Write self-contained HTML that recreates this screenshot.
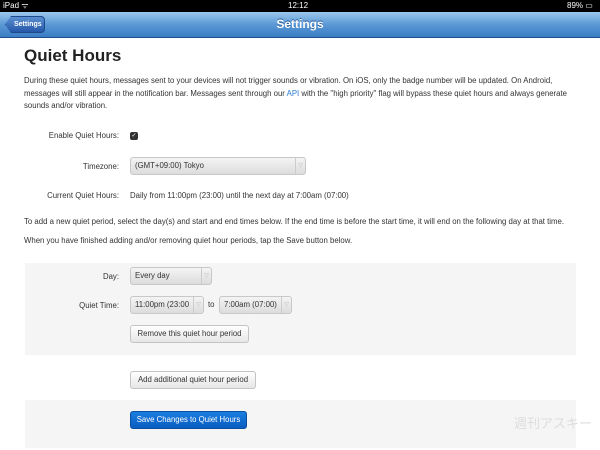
<!DOCTYPE html>
<html><head><style>
*{margin:0;padding:0;box-sizing:border-box}
body{width:600px;height:450px;overflow:hidden;background:#fff;font-family:"Liberation Sans",sans-serif;color:#333;position:relative}
.a{position:absolute;white-space:nowrap}
.s{font-size:7.8px}
.sel{position:absolute;height:18px;border:1px solid #c8c8c8;border-radius:3px;background:linear-gradient(#f4f4f4,#dcdcdc);font-size:7.8px;line-height:16px;padding-left:4px;color:#333}
.sel i{position:absolute;right:0;top:0;width:10px;height:16px;border-left:1px solid #ccc;font-style:normal;color:#bbb;font-size:6px;text-align:center}
.btn{position:absolute;height:18px;border:1px solid #c4c4c4;border-radius:3px;background:linear-gradient(#fff,#e6e6e6);font-size:7.8px;line-height:16px;text-align:center;color:#333}
</style></head><body>
<div class="a" style="left:0;top:0;width:600px;height:12px;background:#000;color:#fff;font-size:8px;line-height:12px">
<span class="a" style="left:3px">iPad ᯤ</span><span class="a" style="left:288px">12:12</span><span class="a" style="left:567px">89% ▭</span></div>
<div class="a" style="left:0;top:12px;width:600px;height:26px;background:linear-gradient(#9cc8ec,#5a98d6 50%,#3a7cc4);border-bottom:1px solid #1f4f8a"></div>
<div class="a" style="left:5px;top:16px;width:40px;height:17px;background:linear-gradient(#5b8fd0,#2557a8);border:1px solid #1d4a8a;border-radius:4px;clip-path:polygon(6px 0,100% 0,100% 100%,6px 100%,0 50%);color:#fff;font-size:7px;font-weight:bold;line-height:15px;padding-left:8px">Settings</div>
<div class="a" style="left:0;width:600px;top:17px;text-align:center;color:#fff;font-size:12px;font-weight:bold;text-shadow:0 -1px #2a5a98">Settings</div>
<div class="a" style="left:24px;top:46px;font-size:17px;font-weight:bold;color:#222">Quiet Hours</div>
<div class="a s" style="left:24px;top:75px;line-height:12.5px;white-space:normal;width:565px">During these quiet hours, messages sent to your devices will not trigger sounds or vibration. On iOS, only the badge number will be updated. On Android, messages will still appear in the notification bar. Messages sent through our <span style="color:#2a7ad0">API</span> with the "high priority" flag will bypass these quiet hours and always generate sounds and/or vibration.</div>
<div class="a s" style="left:0;width:119px;text-align:right;top:131px">Enable Quiet Hours:</div>
<div class="a" style="left:130px;top:132px;width:8px;height:8px;border-radius:2px;background:#333;color:#fff;font-size:6px;line-height:8px;text-align:center">✓</div>
<div class="a s" style="left:0;width:119px;text-align:right;top:162px">Timezone:</div>
<div class="sel" style="left:130px;top:157px;width:176px">(GMT+09:00) Tokyo<i>▽</i></div>
<div class="a s" style="left:0;width:119px;text-align:right;top:191px">Current Quiet Hours:</div>
<div class="a s" style="left:130px;top:191px">Daily from 11:00pm (23:00) until the next day at 7:00am (07:00)</div>
<div class="a s" style="left:24px;top:217px">To add a new quiet period, select the day(s) and start and end times below. If the end time is before the start time, it will end on the following day at that time.</div>
<div class="a s" style="left:24px;top:236px">When you have finished adding and/or removing quiet hour periods, tap the Save button below.</div>
<div class="a" style="left:25px;top:263px;width:551px;height:92px;background:#f5f5f5"></div>
<div class="a s" style="left:0;width:119px;text-align:right;top:272px">Day:</div>
<div class="sel" style="left:130px;top:267px;width:82px">Every day<i>▽</i></div>
<div class="a s" style="left:0;width:119px;text-align:right;top:301px">Quiet Time:</div>
<div class="sel" style="left:130px;top:296px;width:74px;overflow:hidden">11:00pm (23:00<i>▽</i></div>
<div class="a s" style="left:208px;top:300px">to</div>
<div class="sel" style="left:219px;top:296px;width:73px">7:00am (07:00)<i>▽</i></div>
<div class="btn" style="left:130px;top:325px;width:119px">Remove this quiet hour period</div>
<div class="btn" style="left:130px;top:371px;width:126px">Add additional quiet hour period</div>
<div class="a" style="left:25px;top:400px;width:551px;height:48px;background:#f5f5f5"></div>
<div class="a" style="left:130px;top:411px;width:117px;height:18px;border:1px solid #0a4fa0;border-radius:3px;background:linear-gradient(#1a7ee0,#0a5cc0);color:#fff;font-size:7.8px;line-height:16px;text-align:center">Save Changes to Quiet Hours</div>
<div class="a" style="left:514px;top:413px;font-size:13px;color:#ddd;font-family:'Noto Sans CJK JP',sans-serif">週刊アスキー</div>
</body></html>
